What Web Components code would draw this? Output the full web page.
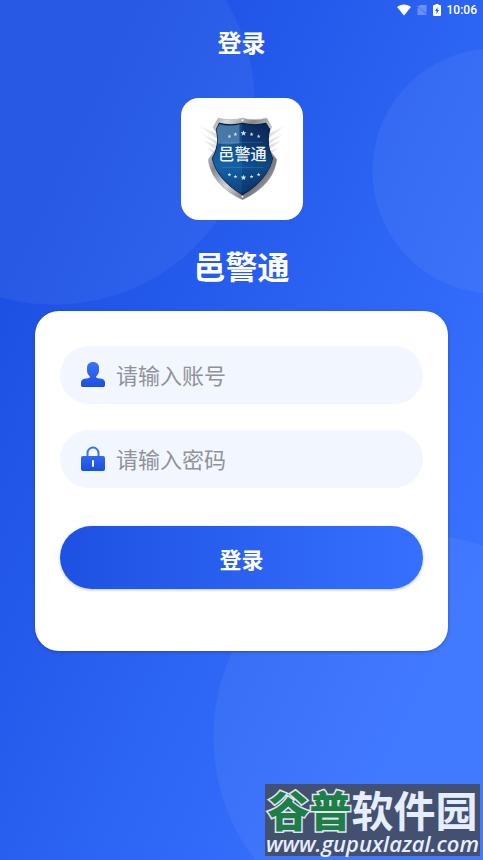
<!DOCTYPE html>
<html lang="zh-CN">
<head>
<meta charset="UTF-8">
<meta name="viewport" content="width=device-width, initial-scale=1">
<title>登录</title>
<style>
	body {
		margin: 0;
		font-family: "Noto Sans CJK SC", sans-serif;
	}
</style>
</head>
<body>
<login-page>
	<status-bar slot="status" time="10:06"></status-bar>
	<app-logo slot="logo" text="邑警通"></app-logo>
	<span slot="name">邑警通</span>
	<login-card>
		<login-field name="account" type="text" hint="请输入账号">
			<svg slot="icon" width="24" height="26" viewBox="0 0 24 26">
				<defs><linearGradient id="user" x1="0" y1="0" x2="0" y2="1">
					<stop offset="0" stop-color="#3d74f8"/><stop offset="1" stop-color="#1a4fe0"/>
				</linearGradient></defs>
				<path fill="url(#user)" d="M12 0c4 0 6 2.500 6 6v2c0 3-1 5-3 6.500q0 1.500 2 1.800l3.500.5c2.300.4 3.500 2 3.500 4v2.200c0 1.400-.8 2-2 2H2c-1.200 0-2-.6-2-2v-2.200c0-2 1.200-3.600 3.500-4l3.500-.5q2-.3 2-1.800C7 13 6 11 6 8V6c0-3.500 2-6 6-6z"/>
			</svg>
		</login-field>
		<login-field name="password" type="password" hint="请输入密码">
			<svg slot="icon" width="24" height="26" viewBox="0 0 24 26">
				<defs><linearGradient id="lock" x1="0" y1="0" x2="0" y2="1">
					<stop offset="0" stop-color="#3068f2"/><stop offset="1" stop-color="#1a4fe0"/>
				</linearGradient></defs>
				<path fill="none" stroke="#3c70ee" stroke-width="2" d="M6.500 11V7a5.500 5.500 0 0 1 11 0v4"/>
				<rect y="10" width="24" height="15" rx="2" fill="url(#lock)"/>
				<rect x="11" y="14" width="2" height="7" rx="1" fill="#fff"/>
			</svg>
		</login-field>
		<login-button slot="action">登录</login-button>
	</login-card>
	<site-mark slot="mark"></site-mark>
</login-page>

<script>
class StatusBar extends HTMLElement {
	constructor() {
		super();
		this.attachShadow({ mode: 'open' });
		this.render();
	}

	render() {
		this.shadowRoot.innerHTML = `
			<svg width="14" height="12" viewBox="0 0 14 12"><path fill="#fff" d="M0 3C4-.5 10-.5 14 3L7 11.500z"/></svg>
			<svg width="10" height="12" viewBox="0 0 10 12">
				<path fill="#6c90f2" d="M3 1h6.500v8.500L1.500 2.500zM1 3.500l8 7.500H.5V4z"/>
				<path stroke="#7c9cf2" d="M0 1.500l9.500 9.500"/>
			</svg>
			<svg width="8" height="12" viewBox="0 0 8 12">
				<path fill="#fff" d="M2.500 0h3v1H7q1 0 1 1v9q0 1-1 1H1q-1 0-1-1V2q0-1 1-1h1.500z"/>
				<path fill="#2a5ce8" d="M4.500 3L2 7h1.500v3L6 6H4.500z"/>
			</svg>
			<span>${this.getAttribute('time')}</span>
			<style>
				:host {
					display: flex;
					align-items: center;
					justify-content: flex-end;
					gap: 6px;
					height: 20px;
					padding-right: 6px;
					color: #fff;
					font: 500 12px/20px Roboto, sans-serif;
				}
			</style>
		`;
	}
}

class AppLogo extends HTMLElement {
	constructor() {
		super();
		this.attachShadow({ mode: 'open' });
		this.render();
	}

	star(x, y, r) {
		const points = [];
		for (let i = 0; i < 10; i++) {
			const radius = i % 2 ? r * 0.42 : r;
			const angle = Math.PI * i / 5 - Math.PI / 2;
			points.push(`${(x + radius * Math.cos(angle)).toFixed(2)},${(y + radius * Math.sin(angle)).toFixed(2)}`);
		}
		return `<polygon points="${points.join(' ')}"/>`;
	}

	render() {
		// звезды: верхний ряд дугой вверх, нижний дугой вниз
		const stars = [
			[48, 38, 2], [54, 36, 2], [62, 35, 3], [70, 36, 2], [77, 38, 2],
			[48, 76, 2], [54, 78, 2], [62, 79, 3], [70, 78, 2], [77, 76, 2],
		].map(([x, y, r]) => this.star(x, y, r)).join('');

		this.shadowRoot.innerHTML = `
			<svg viewBox="0 0 121 121" role="img" aria-label="${this.getAttribute('text')}">
				<defs>
					<linearGradient id="steel" x1="0" y1="0" x2="1" y2="1">
						<stop offset="0" stop-color="#8b8e92"/>
						<stop offset=".15" stop-color="#d8dadd"/>
						<stop offset=".35" stop-color="#84878c"/>
						<stop offset=".55" stop-color="#d2d4d7"/>
						<stop offset=".75" stop-color="#77797d"/>
						<stop offset="1" stop-color="#c0c2c5"/>
					</linearGradient>
					<linearGradient id="blue" x1="0" y1="0" x2="1" y2="0">
						<stop offset="0" stop-color="#2368a8"/>
						<stop offset=".49" stop-color="#1560a0"/>
						<stop offset=".5" stop-color="#0d3c76"/>
						<stop offset="1" stop-color="#0c2551"/>
					</linearGradient>
					<linearGradient id="depth" x1="0" y1="0" x2="0" y2="1">
						<stop offset="0" stop-color="#0b1e48" stop-opacity=".35"/>
						<stop offset=".6" stop-color="#0e5fa6" stop-opacity=".6"/>
						<stop offset="1" stop-color="#0b2c60" stop-opacity=".6"/>
					</linearGradient>
					<linearGradient id="wing" x1="0" y1="0" x2="1" y2="0">
						<stop offset="0" stop-color="#f6f6f7"/>
						<stop offset=".3" stop-color="#cfd1d4"/>
						<stop offset=".7" stop-color="#cfd1d4"/>
						<stop offset="1" stop-color="#f6f6f7"/>
					</linearGradient>
				</defs>
				<path fill="url(#wing)" d="M18 27l18 9v5zM20 35l16 8v4zM22 42l14 5v5zM25 49l10 4v4zM104 27l-18 9v5zM102 35l-16 8v4zM100 42l-14 5v5zM97 49l-10 4v4z"/>
				<path fill="url(#steel)" stroke="#999ca0" stroke-width=".5" d="M37 20q12 3 24 0q12 3 24 0l5 9l-3 5q-4 13 2 19l6 8q-3 25-34 40Q30 86 27 61l6-8q6-6 2-19l-3-5z"/>
				<path fill="url(#blue)" stroke="#0a1c3e" stroke-width="1" d="M38 25q11 3 23 0q12 3 23 0l4 6q-4 15 3 29q-5 21-30 36Q36 81 31 60q8-14 4-29z"/>
				<path fill="url(#depth)" d="M38 25q11 3 23 0q12 3 23 0l4 6q-4 15 3 29q-5 21-30 36Q36 81 31 60q8-14 4-29z"/>
				<path fill="#92b8d8" opacity=".4" d="M38 26q10 3 20 0v19q-13 2-22 0q1-8-1-14z"/>
				<path stroke="#8fb4dc" stroke-width=".6" stroke-dasharray="1 1" opacity=".7" d="M42 44h40M42 69h40"/>
				<g fill="#d5e2f1">${stars}</g>
				<g fill="#fff"><circle cx="61" cy="22" r="1"/><circle cx="61" cy="98" r="1"/></g>
				<text x="61" y="61" text-anchor="middle">${this.getAttribute('text')}</text>
			</svg>
			<style>
				:host {
					display: block;
					width: 122px;
					height: 122px;
					border-radius: 18px;
					background: #fff;
				}
				svg {
					display: block;
				}
				text {
					fill: #eef5fc;
					font-size: 16px;
					font-weight: 500;
				}
			</style>
		`;
	}
}

class LoginField extends HTMLElement {
	constructor() {
		super();
		this.attachShadow({ mode: 'open' });
		this.render();
	}

	render() {
		const name = this.getAttribute('name');
		const hint = this.getAttribute('hint');

		this.shadowRoot.innerHTML = `
			<label for="${name}"><slot name="icon"></slot></label>
			<input id="${name}" type="${this.getAttribute('type')}" placeholder="${hint}" aria-label="${hint}">
			<style>
				:host {
					display: flex;
					align-items: center;
					gap: 11px;
					height: 58px;
					padding: 0 21px;
					border-radius: 29px;
					background: #f2f6ff;
				}
				label {
					display: flex;
				}
				input {
					flex: 1;
					min-width: 0;
					height: 40px;
					margin: 0;
					padding: 0 0 2px;
					border: 0;
					outline: none;
					background: none;
					color: #222;
					font-family: inherit;
					font-size: 22px;
					font-weight: 400;
				}
				input::placeholder {
					color: #909297;
				}
			</style>
		`;
	}
}

class LoginButton extends HTMLElement {
	constructor() {
		super();
		this.attachShadow({ mode: 'open' });
		this.render();
	}

	render() {
		this.shadowRoot.innerHTML = `
			<button type="submit"><slot></slot></button>
			<style>
				:host {
					display: block;
				}
				button {
					width: 100%;
					height: 63px;
					padding: 0;
					border: 0;
					border-radius: 32px;
					background: linear-gradient(90deg, #1e51e2, #3670ff);
					box-shadow: 0 1px 3px rgba(40, 90, 230, 0.35);
					color: #fff;
					font-family: inherit;
					font-size: 22px;
					font-weight: 700;
					cursor: pointer;
				}
			</style>
		`;
	}
}

class LoginCard extends HTMLElement {
	constructor() {
		super();
		this.attachShadow({ mode: 'open' });
		this.render();
	}

	render() {
		this.shadowRoot.innerHTML = `
			<form>
				<div class="fields"><slot></slot></div>
				<slot name="action"></slot>
			</form>
			<style>
				:host {
					display: block;
					padding: 35px 25px 62px;
					border-radius: 24px;
					background: #fff;
					box-shadow: 0 1px 3px rgba(20, 50, 130, 0.5);
				}
				form {
					display: flex;
					flex-direction: column;
					gap: 38px;
				}
				.fields {
					display: flex;
					flex-direction: column;
					gap: 26px;
				}
			</style>
		`;
	}
}

class SiteMark extends HTMLElement {
	constructor() {
		super();
		this.attachShadow({ mode: 'open' });
		this.render();
	}

	render() {
		this.shadowRoot.innerHTML = `
			<div class="title"><b>谷普</b>软件园</div>
			<div class="url">www.gupuxlazal.com</div>
			<style>
				:host {
					display: block;
					padding: 0 1px 4px;
					background: #43506f;
					color: #e6edff;
					text-align: center;
					white-space: nowrap;
				}
				.title {
					font-size: 42px;
					font-weight: 700;
					line-height: 50px;
				}
				b {
					color: #1f7d49;
					-webkit-text-stroke: 3px #dce8ee;
					paint-order: stroke fill;
				}
				.url {
					font: italic 600 22px/18px "Open Sans", sans-serif;
				}
			</style>
		`;
	}
}

class LoginPage extends HTMLElement {
	constructor() {
		super();
		this.attachShadow({ mode: 'open' });
		this.render();
	}

	render() {
		this.shadowRoot.innerHTML = `
			<slot name="status"></slot>
			<h1>登录</h1>
			<main>
				<slot name="logo"></slot>
				<h2><slot name="name"></slot></h2>
				<div class="card"><slot></slot></div>
			</main>
			<div class="mark"><slot name="mark"></slot></div>
			<style>
				:host {
					display: block;
					position: relative;
					box-sizing: border-box;
					min-height: 100vh;
					overflow: hidden;
					color: #fff;
					background:
						radial-gradient(circle at 54px 104px, rgba(255, 255, 255, 0.05) 200px, transparent 201px),
						radial-gradient(circle at calc(100% + 12px) 171px, rgba(255, 255, 255, 0.05) 122px, transparent 123px),
						radial-gradient(circle at calc(100% - 67px) calc(100% - 123px), rgba(255, 255, 255, 0.05) 202px, transparent 203px),
						linear-gradient(115deg, #1c50e3 15%, #3873ff 85%);
				}
				h1 {
					margin: 2px 0 0;
					font-size: 24px;
					font-weight: 700;
					line-height: 40px;
					text-align: center;
				}
				main {
					display: flex;
					flex-direction: column;
					align-items: center;
					padding: 36px 35px 0;
				}
				h2 {
					margin: 22px 0;
					font-size: 32px;
					font-weight: 700;
					line-height: 47px;
				}
				.card {
					align-self: stretch;
				}
				.mark {
					position: absolute;
					right: 3px;
					bottom: 4px;
				}
			</style>
		`;
	}
}

customElements.define('status-bar', StatusBar);
customElements.define('app-logo', AppLogo);
customElements.define('login-field', LoginField);
customElements.define('login-button', LoginButton);
customElements.define('login-card', LoginCard);
customElements.define('site-mark', SiteMark);
customElements.define('login-page', LoginPage);
</script>
</body>
</html>
